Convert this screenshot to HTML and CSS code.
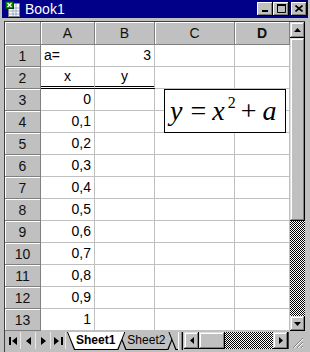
FILE: index.html
```html
<!DOCTYPE html>
<html lang="es">
<head>
  <meta charset="UTF-8" />
  <title>Book1</title>
  <link rel="stylesheet" href="styles.css">
</head>
<body>
  <div class="window">

    <div class="titlebar">
      <svg class="app-icon" width="16" height="16" viewBox="0 0 16 16">
        <rect x="3.5" y="2.5" width="11" height="13" fill="#fff" stroke="#808080"/>
        <path d="M4 7h10M4 10h10M4 13h10M8 3v12M11 3v12" stroke="#9aa6c8" stroke-width="1"/>
        <rect x="0.5" y="0.5" width="8" height="7" fill="#008000" stroke="#004000"/>
        <path d="M2.5 2l4 4M6.5 2l-4 4" stroke="#fff" stroke-width="1.4"/>
      </svg>
      <span class="title">Book1</span>
      <div class="caption-btns">
        <div class="cap-btn">
          <svg width="8" height="7" viewBox="0 0 8 7"><rect x="1" y="5" width="6" height="2" fill="#000"/></svg>
        </div>
        <div class="cap-btn">
          <svg width="9" height="9" viewBox="0 0 9 9"><path d="M0.5 1.5h8v7h-8z" fill="none" stroke="#000"/><rect x="0" y="0" width="9" height="2" fill="#000"/></svg>
        </div>
        <div class="cap-btn close">
          <svg width="8" height="7" viewBox="0 0 8 7"><path d="M0.5 0.5l7 6M7.5 0.5l-7 6" stroke="#000" stroke-width="1.6"/></svg>
        </div>
      </div>
    </div>

    <div class="main">
      <div class="grid">
        <div class="h corner"></div>
        <div class="h">A</div>
        <div class="h">B</div>
        <div class="h">C</div>
        <div class="h bold">D</div>

        <div class="h">1</div><div class="c">a=</div><div class="c num">3</div><div class="c"></div><div class="c"></div>
        <div class="h">2</div><div class="c center dbl">x</div><div class="c center dbl">y</div><div class="c"></div><div class="c"></div>
        <div class="h">3</div><div class="c num">0</div><div class="c"></div><div class="c"></div><div class="c"></div>
        <div class="h">4</div><div class="c num">0,1</div><div class="c"></div><div class="c"></div><div class="c"></div>
        <div class="h">5</div><div class="c num">0,2</div><div class="c"></div><div class="c"></div><div class="c"></div>
        <div class="h">6</div><div class="c num">0,3</div><div class="c"></div><div class="c"></div><div class="c"></div>
        <div class="h">7</div><div class="c num">0,4</div><div class="c"></div><div class="c"></div><div class="c"></div>
        <div class="h">8</div><div class="c num">0,5</div><div class="c"></div><div class="c"></div><div class="c"></div>
        <div class="h">9</div><div class="c num">0,6</div><div class="c"></div><div class="c"></div><div class="c"></div>
        <div class="h">10</div><div class="c num">0,7</div><div class="c"></div><div class="c"></div><div class="c"></div>
        <div class="h">11</div><div class="c num">0,8</div><div class="c"></div><div class="c"></div><div class="c"></div>
        <div class="h">12</div><div class="c num">0,9</div><div class="c"></div><div class="c"></div><div class="c"></div>
        <div class="h">13</div><div class="c num">1</div><div class="c"></div><div class="c"></div><div class="c"></div>

        <!-- objeto insertado: la fórmula -->
        <div class="formula">
          <span class="var">y</span><span class="op eq">=</span><span class="var x">x</span><sup>2</sup><span class="op plus">+</span><span class="var a">a</span>
        </div>
      </div>

      <div class="vscroll">
        <div class="sbtn">
          <svg width="7" height="4" viewBox="0 0 7 4"><path d="M3.5 0L7 4H0z" fill="#000"/></svg>
        </div>
        <div class="thumb"></div>
        <div class="track"></div>
        <div class="sbtn">
          <svg width="7" height="4" viewBox="0 0 7 4"><path d="M0 0h7L3.5 4z" fill="#000"/></svg>
        </div>
      </div>
    </div>

    <div class="tabbar">
      <div class="navbtns">
        <div class="nbtn">
          <svg width="9" height="8" viewBox="0 0 9 8"><rect x="0" y="0" width="2" height="8" fill="#000"/><path d="M8 0v8L3 4z" fill="#000"/></svg>
        </div>
        <div class="nbtn">
          <svg width="5" height="8" viewBox="0 0 5 8"><path d="M5 0v8L0 4z" fill="#000"/></svg>
        </div>
        <div class="nbtn">
          <svg width="5" height="8" viewBox="0 0 5 8"><path d="M0 0v8l5-4z" fill="#000"/></svg>
        </div>
        <div class="nbtn">
          <svg width="9" height="8" viewBox="0 0 9 8"><path d="M0 0v8l5-4z" fill="#000"/><rect x="7" y="0" width="2" height="8" fill="#000"/></svg>
        </div>
      </div>
      <div class="tabs">
        <div class="tab active"><div class="tab-face">Sheet1</div></div>
        <div class="tab"><div class="tab-face">Sheet2</div></div>
        <div class="tab tab-cut"><div class="tab-face"></div></div>
      </div>
      <div class="split"></div>
      <div class="hscroll">
        <div class="sbtn side">
          <svg width="4" height="7" viewBox="0 0 4 7"><path d="M4 0v7L0 3.5z" fill="#000"/></svg>
        </div>
        <div class="hthumb"></div>
        <div class="htrack"></div>
        <div class="sbtn side">
          <svg width="4" height="7" viewBox="0 0 4 7"><path d="M0 0v7l4-3.5z" fill="#000"/></svg>
        </div>
      </div>
      <div class="grip">
        <svg width="12" height="12" viewBox="0 0 12 12">
          <path d="M11 1L1 11M11 5L5 11M11 9L9 11" stroke="#808080" stroke-width="1"/>
          <path d="M11 2L2 11M11 6L6 11M11 10L10 11" stroke="#fff" stroke-width="1"/>
        </svg>
      </div>
    </div>

  </div>
</body>
</html>
```

FILE: styles.css
```css
* {
  box-sizing: border-box;
  margin: 0;
  padding: 0;
}

body {
  background: #c0c0c0;
  font-family: 'Liberation Sans', Arial, sans-serif;
  color: #000;
}

.window {
  width: 310px;
  height: 352px;
  background: #c0c0c0;
  overflow: hidden;
  padding-left: 4px;
}

/* barra de título */
.titlebar {
  height: 18px;
  margin: 0 2px 0 -2px;
  background: #000088;
  display: flex;
  align-items: center;
  padding: 0 1px 0 3px;
}

.app-icon {
  flex: none;
}

.title {
  color: #fff;
  font-size: 14px;
  margin-left: 4px;
  flex: 1;
  line-height: 18px;
}

.caption-btns {
  display: flex;
}

.cap-btn {
  width: 16px;
  height: 14px;
  background: #c0c0c0;
  box-shadow: inset -1px -1px #000, inset 1px 1px #fff, inset -2px -2px #808080;
  display: flex;
  align-items: center;
  justify-content: center;
  padding-bottom: 1px;
}

.cap-btn.close {
  margin-left: 2px;
}

/* hoja */
.main {
  margin-top: 3px;
  display: flex;
  border-left: 1px solid #404040;
  border-top: 1px solid #404040;
  width: 301px;
}

.grid {
  position: relative;
  display: grid;
  grid-template-columns: 36px 54px 60px 80px 55px;
  grid-template-rows: 23px repeat(13, 22px);
  background: #fff;
  font-size: 14px;
}

.h {
  background: #c0c0c0;
  border-right: 1px solid #808080;
  border-bottom: 1px solid #808080;
  box-shadow: inset 1px 1px #fff;
  text-align: center;
  line-height: 22px;
  color: #111;
}

.corner {
  box-shadow: inset 1px 1px #fff;
}

.bold {
  font-weight: bold;
}

.c {
  border-right: 1px solid #c0c0c0;
  border-bottom: 1px solid #c0c0c0;
  padding: 0 3px;
  line-height: 21px;
  white-space: nowrap;
  overflow: hidden;
}

.num {
  text-align: right;
}

.center {
  text-align: center;
}

.dbl {
  border-bottom: 3px double #000;
  line-height: 19px;
}

.formula {
  position: absolute;
  left: 159px;
  top: 67px;
  width: 122px;
  height: 44px;
  border: 1px solid #000;
  background: #fff;
  font-family: 'Liberation Serif', 'Times New Roman', serif;
  font-size: 28px;
  line-height: 42px;
  padding-left: 5px;
  white-space: nowrap;
}

.var {
  font-style: italic;
}

.op {
  margin-left: 8px;
}

.formula .x {
  margin-left: 6px;
}

.formula sup {
  font-size: 16px;
  vertical-align: 12px;
  line-height: 0;
  margin-left: 3px;
}

.formula .plus {
  margin-left: 5px;
}

.formula .a {
  margin-left: 6px;
}

/* barras de desplazamiento */
.vscroll {
  width: 15px;
  display: flex;
  flex-direction: column;
}

.sbtn {
  width: 15px;
  height: 15px;
  background: #c0c0c0;
  box-shadow: inset -1px -1px #000, inset 1px 1px #dfdfdf, inset -2px -2px #808080, inset 2px 2px #fff;
  display: flex;
  align-items: center;
  justify-content: center;
}

.vscroll .sbtn:first-child {
  height: 16px;
}

.thumb {
  height: 183px;
  background: #c0c0c0;
  box-shadow: inset -1px -1px #000, inset 1px 1px #dfdfdf, inset -2px -2px #808080, inset 2px 2px #fff;
}

.track,
.htrack {
  background: repeating-conic-gradient(#000 0 25%, #fff 0 50%) 0 0 / 2px 2px;
}

.track {
  height: 95px;
}

/* pestañas */
.tabbar {
  display: flex;
  height: 21px;
  border-left: 1px solid #404040;
  padding-top: 1px;
}

.navbtns {
  display: flex;
  margin-left: 1px;
}

.nbtn {
  width: 15px;
  height: 17px;
  display: flex;
  align-items: center;
  justify-content: center;
  border-right: 1px solid #e8e8e8;
}

.tabs {
  display: flex;
  width: 111px;
  overflow: hidden;
  margin-left: 1px;
}

.tab {
  position: relative;
  padding: 0 1px 1px;
  height: 18px;
  background: #000;
  clip-path: polygon(0 0, 100% 0, calc(100% - 7px) 100%, 7px 100%);
  font-size: 12px;
  flex: none;
}

.tab + .tab {
  margin-left: -7px;
}

.tab-face {
  height: 17px;
  padding: 0 9px 0 8px;
  line-height: 16px;
  background: #c0c0c0;
  clip-path: polygon(0 0, 100% 0, calc(100% - 7px) 100%, 7px 100%);
}

.tab.active {
  z-index: 2;
  font-weight: bold;
}

.tab.active .tab-face {
  background: #fff;
}

.tab-cut .tab-face {
  width: 30px;
}

.split {
  width: 5px;
  height: 18px;
  background: #c0c0c0;
  box-shadow: inset -1px 0 #000, inset 1px 0 #fff, inset -2px 0 #808080;
}

.hscroll {
  display: flex;
  margin-left: 1px;
  height: 17px;
  border-right: 1px solid #404040;
}

.sbtn.side {
  height: 17px;
}

.hthumb {
  width: 26px;
  background: #c0c0c0;
  box-shadow: inset -1px -1px #000, inset 1px 1px #dfdfdf, inset -2px -2px #808080, inset 2px 2px #fff;
}

.htrack {
  width: 48px;
}

.grip {
  width: 16px;
  height: 20px;
  display: flex;
  align-items: flex-end;
  justify-content: flex-end;
  padding: 0 1px 3px 0;
}
```
